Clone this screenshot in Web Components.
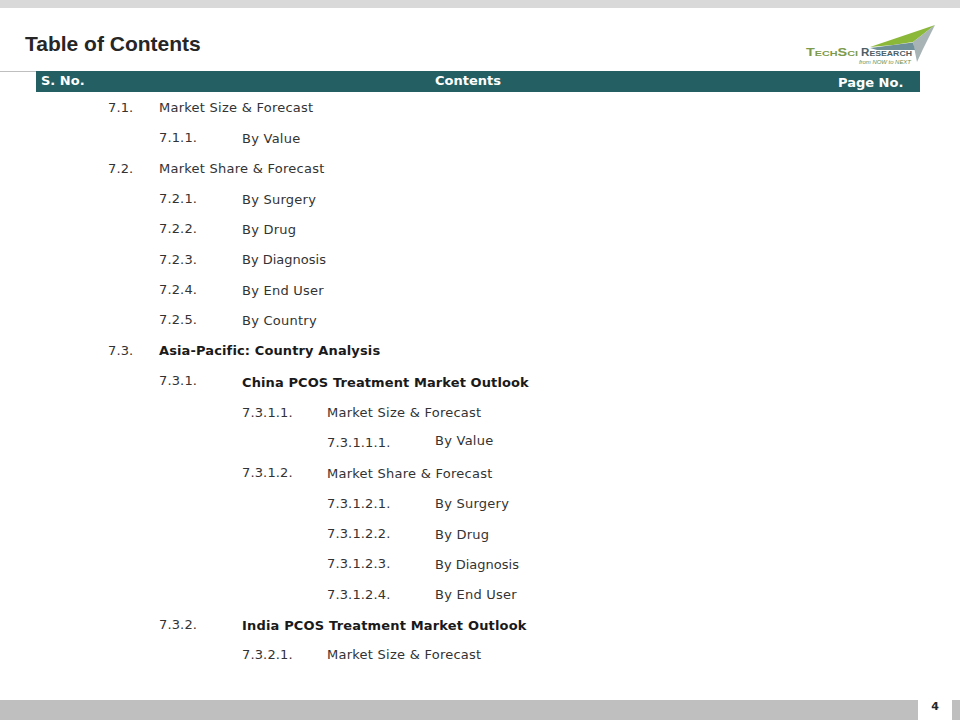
<!DOCTYPE html>
<html>
<head>
<meta charset="utf-8">
<title>Table of Contents</title>
<style>
  html, body { margin: 0; padding: 0; background: #fff; }
</style>
</head>
<body>
<toc-slide>
  <toc-header slot="head" title="Table of Contents"></toc-header>
  <toc-bar slot="head"></toc-bar>
  <toc-row level="0" num="7.1." label="Market Size &amp; Forecast"></toc-row>
  <toc-row level="1" num="7.1.1." label="By Value" dl="1"></toc-row>
  <toc-row level="0" num="7.2." label="Market Share &amp; Forecast"></toc-row>
  <toc-row level="1" num="7.2.1." label="By Surgery" dl="1"></toc-row>
  <toc-row level="1" num="7.2.2." label="By Drug" dl="1"></toc-row>
  <toc-row level="1" num="7.2.3." label="By Diagnosis" ls="0"></toc-row>
  <toc-row level="1" num="7.2.4." label="By End User" dl="1"></toc-row>
  <toc-row level="1" num="7.2.5." label="By Country" dl="1"></toc-row>
  <toc-row level="0" num="7.3." label="Asia-Pacific: Country Analysis" bold></toc-row>
  <toc-row level="1" num="7.3.1." label="China PCOS Treatment Market Outlook" bold dl="2" ls="0.1"></toc-row>
  <toc-row level="2" num="7.3.1.1." label="Market Size &amp; Forecast" dn="2" dl="2"></toc-row>
  <toc-row level="3" num="7.3.1.1.1." label="By Value" dn="1" dl="-1"></toc-row>
  <toc-row level="2" num="7.3.1.2." label="Market Share &amp; Forecast" dn="1" dl="2"></toc-row>
  <toc-row level="3" num="7.3.1.2.1." label="By Surgery" dn="2" dl="2"></toc-row>
  <toc-row level="3" num="7.3.1.2.2." label="By Drug" dn="1" dl="2"></toc-row>
  <toc-row level="3" num="7.3.1.2.3." label="By Diagnosis" dn="1" dl="2" ls="0"></toc-row>
  <toc-row level="3" num="7.3.1.2.4." label="By End User" dn="1" dl="1"></toc-row>
  <toc-row level="1" num="7.3.2." label="India PCOS Treatment Market Outlook" bold dn="1" dl="2" ls="0.17"></toc-row>
  <toc-row level="2" num="7.3.2.1." label="Market Size &amp; Forecast" dn="1" dl="1"></toc-row>
  <toc-footer slot="foot" page="4"></toc-footer>
</toc-slide>
<script>
class TocSlide extends HTMLElement {
  constructor() {
    super();
    this.attachShadow({ mode: "open" });
    this.shadowRoot.innerHTML = `
      <style>
        :host {
          display: flex;
          flex-direction: column;
          width: 960px;
          height: 720px;
          overflow: hidden;
          background: #fff;
        }
        .top { height: 8px; background: #d9d9d9; flex-shrink: 0; }
        .rows { display: flex; flex-direction: column; padding-top: 8px; flex: 1; }
      </style>
      <div class="top"></div>
      <slot name="head"></slot>
      <div class="rows"><slot></slot></div>
      <slot name="foot"></slot>
    `;
  }
}

class TocHeader extends HTMLElement {
  constructor() {
    super();
    this.attachShadow({ mode: "open" });
    this.shadowRoot.innerHTML = `
      <style>
        :host {
          display: flex;
          justify-content: space-between;
          height: 63px;
          padding: 0 25px;
          position: relative;
        }
        h1 {
          margin: 24px 0 0;
          font: bold 21px/24px "Liberation Sans", Arial, sans-serif;
          color: #262626;
        }
        svg { position: absolute; left: 805px; top: 17px; }
      </style>
      <h1>${this.getAttribute("title")}</h1>
      <svg width="132" height="44" viewBox="0 0 132 44">
        <path d="M130 0 L65 22 L88 20 L108 17Z" fill="#8cb83a"/>
        <path d="M108 17 L130 0 L118 24 L112 37Z" fill="#a7b3b5"/>
        <path d="M65 23 L108 17.5 L110 25 L72 25Z" fill="#6f8f99"/>
        <g font-family="Liberation Sans" font-weight="bold">
          <text x="1" y="31" fill="#7d9b4a" font-size="7.5" textLength="52" lengthAdjust="spacingAndGlyphs"><tspan font-size="10">T</tspan>ECH<tspan font-size="10">S</tspan>CI</text>
          <text x="56" y="31" fill="#4d5f66" font-size="7.5" textLength="51" lengthAdjust="spacingAndGlyphs"><tspan font-size="10">R</tspan>ESEARCH</text>
        </g>
        <text x="54" y="39" font-family="Liberation Sans" font-size="6" font-style="italic" fill="#6f8f4a" textLength="52" lengthAdjust="spacing">from NOW to NEXT</text>
      </svg>
    `;
  }
}

class TocBar extends HTMLElement {
  constructor() {
    super();
    this.attachShadow({ mode: "open" });
    this.shadowRoot.innerHTML = `
      <style>
        :host {
          display: flex;
          align-items: flex-start;
          height: 21px;
          margin-left: 36px;
          width: 884px;
          background: #235f63;
          color: #fff;
          font: bold 13px/16px "DejaVu Sans", Verdana, sans-serif;
          position: relative;
        }
        .rule { position: absolute; left: -36px; top: 0; width: 36px; height: 1px; background: #bfbfbf; }
        .sno { margin: 2px 0 0 5px; width: 394px; }
        .con { margin-top: 2px; width: 403px; }
        .pg { margin-top: 4px; }
      </style>
      <div class="rule"></div>
      <div class="sno">S. No.</div>
      <div class="con">Contents</div>
      <div class="pg">Page No.</div>
    `;
  }
}

const LEVELS = [
  { left: 108, width: 51 },
  { left: 159, width: 83 },
  { left: 242, width: 85 },
  { left: 327, width: 108 }
];

class TocRow extends HTMLElement {
  constructor() {
    super();
    this.attachShadow({ mode: "open" });
    const lv = LEVELS[+this.getAttribute("level")];
    const dn = +(this.getAttribute("dn") || 0);
    const dl = +(this.getAttribute("dl") || 0);
    const ls = this.getAttribute("ls");
    this.shadowRoot.innerHTML = `
      <style>
        :host {
          display: flex;
          align-items: flex-start;
          height: 30.35px;
          font: 13px/16px "DejaVu Sans", Verdana, sans-serif;
          color: #333;
          letter-spacing: 0.25px;
        }
        .num { letter-spacing: 0.15px; }
        :host([bold]) .label { font-weight: bold; color: #1a1a1a; letter-spacing: 0.12px; }
      </style>
      <div class="num" style="margin:${dn}px 0 0 ${lv.left}px;width:${lv.width}px">${this.getAttribute("num")}</div>
      <div class="label" style="margin-top:${dl}px${ls !== null ? `;letter-spacing:${ls}px` : ""}">${this.getAttribute("label").replace(/&/g, "&amp;")}</div>
    `;
  }
}

class TocFooter extends HTMLElement {
  constructor() {
    super();
    this.attachShadow({ mode: "open" });
    this.shadowRoot.innerHTML = `
      <style>
        :host {
          display: flex;
          height: 20px;
          flex-shrink: 0;
          padding-left: 918px;
          padding-right: 8px;
          background: #bfbfbf;
        }
        .page {
          background: #fff;
          width: 34px;
          height: 20px;
          display: flex;
          justify-content: center;
          align-items: flex-start;
          font: bold 11px/14px "DejaVu Sans", Verdana, sans-serif;
          color: #262626;
        }
      </style>
      <div class="page"><span>${this.getAttribute("page")}</span></div>
    `;
  }
}

customElements.define("toc-slide", TocSlide);
customElements.define("toc-header", TocHeader);
customElements.define("toc-bar", TocBar);
customElements.define("toc-row", TocRow);
customElements.define("toc-footer", TocFooter);
</script>
</body>
</html>
